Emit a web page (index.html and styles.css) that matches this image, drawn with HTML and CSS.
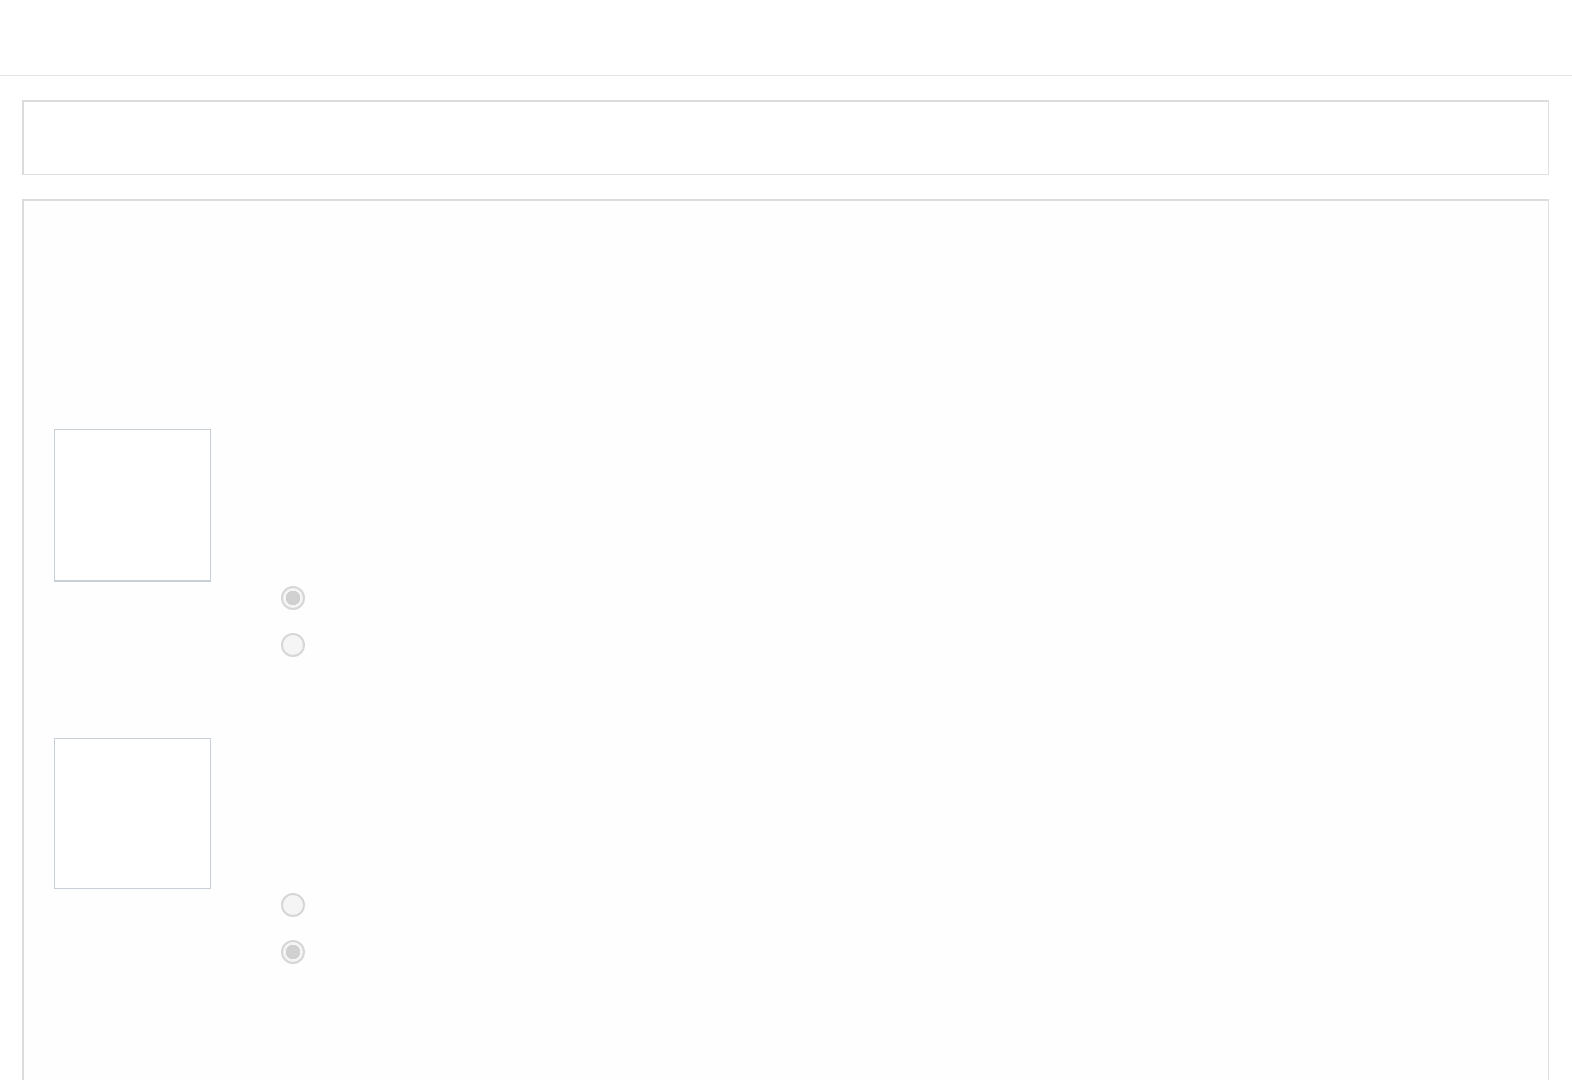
FILE: index.html
```html
<!DOCTYPE html>
<html>
	<head>
		<meta charset="UTF-8">
		<meta name="viewport" content="width=device-width, initial-scale=1">
		<title>Survey</title>
		<link rel="stylesheet" href="styles.css">
	</head>
	<body>
		<header class="topbar"></header>
		<main class="page">
			<section class="panel panel-head"></section>
			<section class="panel panel-body">
				<div class="question">
					<div class="thumb thumb-first"></div>
					<div class="choices">
						<label class="choice"><input type="radio" name="q1" checked disabled></label>
						<label class="choice"><input type="radio" name="q1" disabled></label>
					</div>
				</div>
				<div class="question">
					<div class="thumb"></div>
					<div class="choices choices-short">
						<label class="choice"><input type="radio" name="q2" disabled></label>
						<label class="choice"><input type="radio" name="q2" checked disabled></label>
					</div>
				</div>
			</section>
		</main>
	</body>
</html>
```

FILE: styles.css
```css
*, *:before, *:after {
	box-sizing: border-box;
}
html {
	font-family: "Liberation Sans", Arial, sans-serif;
	font-size: 14px;
}
body {
	background: #fff;
	margin: 0;
	overflow: hidden;
}
.topbar {
	display: block;
	height: 76px;
	border-bottom: 1px solid #e4e4e4;
}
.page {
	display: flex;
	flex-direction: column;
	gap: 24px;
	padding: 24px 23px 0 22px;
}
.panel {
	border-style: solid;
	border-color: #dcdcdc #e0e0e0 #e0e0e0 #dcdcdc;
	border-width: 2px 1px 1px 2px;
}
.panel-head {
	height: 75px;
	background: #fff;
}
.panel-body {
	background: #fefefe;
	min-height: 900px;
	padding: 228px 30px 0;
	display: flex;
	flex-direction: column;
	gap: 81px;
}
.question {
	display: flex;
	gap: 70px;
}
.thumb {
	width: 157px;
	height: 151px;
	background: #fff;
	border: 1px solid #c9cfd7;
}
.thumb-first {
	height: 153px;
	border-bottom-width: 2px;
}
.choices {
	display: flex;
	flex-direction: column;
	gap: 23px;
	padding-top: 157px;
}
.choices-short {
	padding-top: 155px;
}
.choice {
	display: block;
	width: 25px;
	height: 24px;
}
.choice input {
	appearance: none;
	-webkit-appearance: none;
	display: block;
	margin: 0;
	width: 24px;
	height: 24px;
	border-radius: 50%;
	border: 2px solid #d6d6d6;
	background: #f5f5f5;
}
.choice input:checked {
	background: radial-gradient(circle, #d0d0d0 0 7px, #f5f5f5 7.5px);
}
```
